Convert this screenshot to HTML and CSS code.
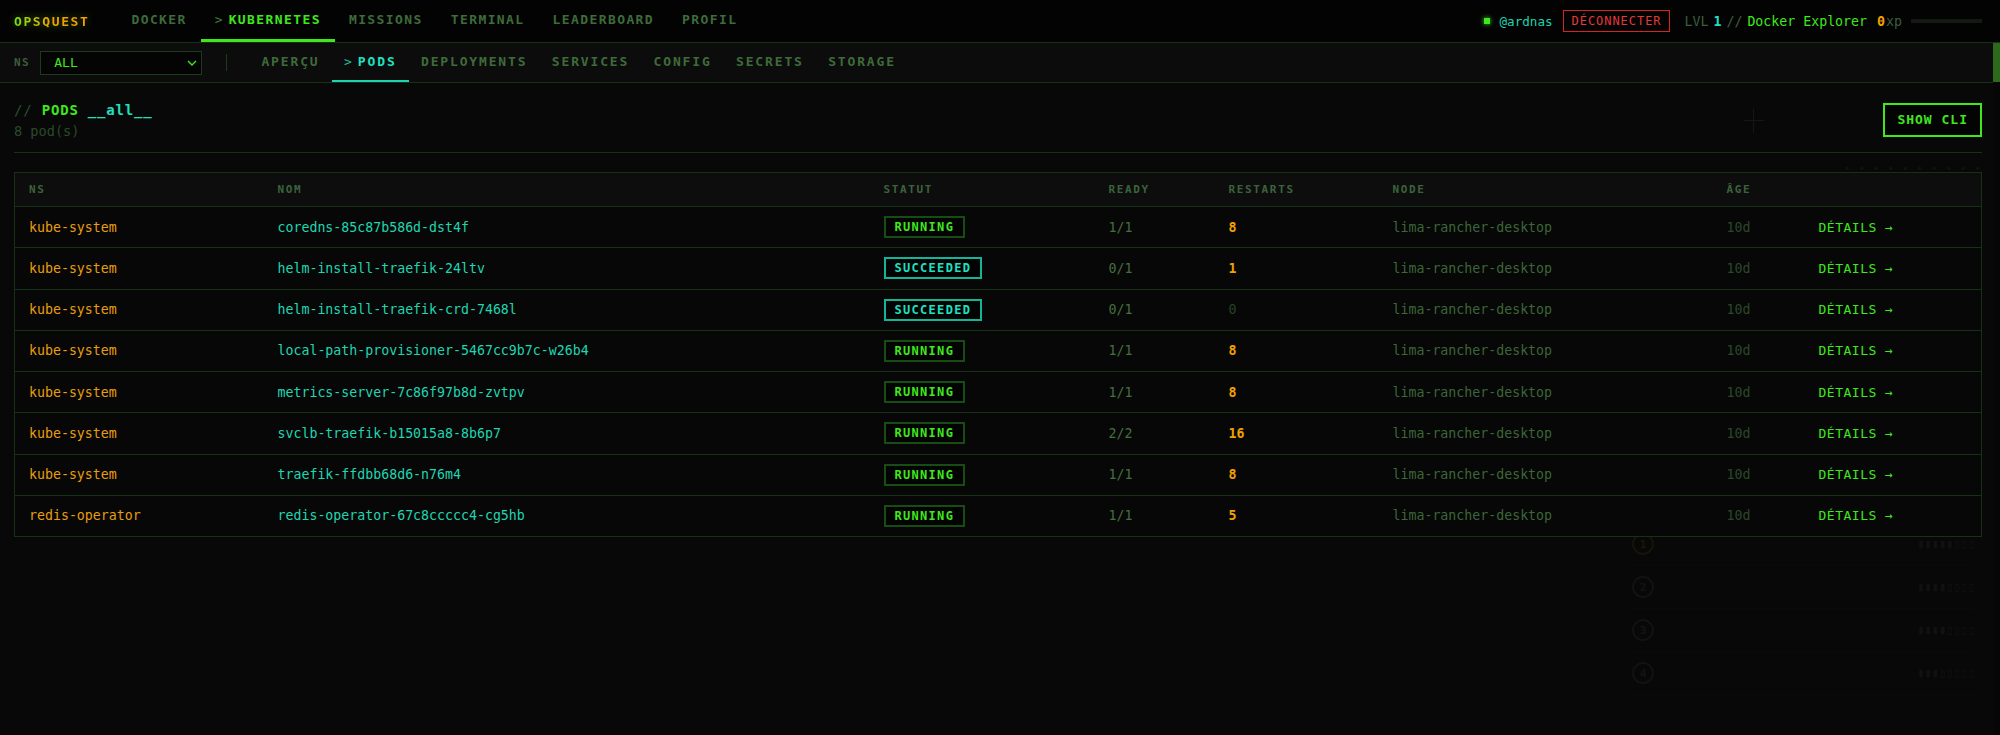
FILE: index.html
```html
<!DOCTYPE html>
<html lang="fr">
<head>
    <meta charset="UTF-8">
    <meta name="viewport" content="width=device-width, initial-scale=1.0">
    <title>OpsQuest - Kubernetes / Pods</title>
    <link rel="stylesheet" href="styles.css">
</head>
<body>
    <header class="topbar">
        <div class="logo">OPSQUEST</div>
        <nav class="mainnav">
            <a class="nav-item" href="#">DOCKER</a>
            <a class="nav-item active" href="#"><span class="caret">&gt;</span>KUBERNETES</a>
            <a class="nav-item" href="#">MISSIONS</a>
            <a class="nav-item" href="#">TERMINAL</a>
            <a class="nav-item" href="#">LEADERBOARD</a>
            <a class="nav-item" href="#">PROFIL</a>
        </nav>
        <div class="user">
            <span class="status-dot"></span>
            <span class="handle">@ardnas</span>
            <button class="logout" type="button">DÉCONNECTER</button>
            <div class="level">
                <span class="dim">LVL</span>
                <span class="lvl-num">1</span>
                <span class="dim">//</span>
                <span class="rank">Docker Explorer</span>
            </div>
            <div class="xp"><span class="xp-num">0</span><span class="dim">xp</span></div>
            <div class="xp-bar"><div class="xp-fill"></div></div>
        </div>
    </header>

    <div class="workspace">
        <div class="workspace-main">
            <!-- faint background decoration -->
            <div class="ghost" aria-hidden="true">
                <span class="crosshair"></span>
                <div class="dots"></div>
                <ol class="ghost-board">
                    <li><span class="ring first">1</span><span class="bars">▮▮▮▮▮▯▯▯</span></li>
                    <li><span class="ring">2</span><span class="bars">▮▮▮▮▯▯▯▯</span></li>
                    <li><span class="ring">3</span><span class="bars">▮▮▮▮▯▯▯▯</span></li>
                    <li><span class="ring">4</span><span class="bars">▮▮▮▯▯▯▯▯</span></li>
                </ol>
            </div>

            <div class="subbar">
                <label class="ns-label" for="ns">NS</label>
                <div class="ns-select">
                    <select id="ns">
                        <option selected>ALL</option>
                        <option>default</option>
                        <option>kube-system</option>
                        <option>redis-operator</option>
                    </select>
                    <svg class="chevron" width="10" height="6" viewBox="0 0 10 6"><path d="M1 1l4 4 4-4" fill="none" stroke="currentColor" stroke-width="1.4"/></svg>
                </div>
                <span class="vsep"></span>
                <nav class="subnav">
                    <a class="sub-item" href="#">APERÇU</a>
                    <a class="sub-item active" href="#"><span class="caret">&gt;</span>PODS</a>
                    <a class="sub-item" href="#">DEPLOYMENTS</a>
                    <a class="sub-item" href="#">SERVICES</a>
                    <a class="sub-item" href="#">CONFIG</a>
                    <a class="sub-item" href="#">SECRETS</a>
                    <a class="sub-item" href="#">STORAGE</a>
                </nav>
            </div>

            <main class="content">
                <div class="page-head">
                    <div>
                        <h1 class="page-title"><span class="slashes">//</span> PODS <span class="ns-name">__all__</span></h1>
                        <p class="page-sub">8 pod(s)</p>
                    </div>
                    <button class="btn-cli" type="button">SHOW CLI</button>
                </div>

                <table class="pods">
                    <colgroup>
                        <col class="c-ns"><col class="c-name"><col class="c-status"><col class="c-ready">
                        <col class="c-restarts"><col class="c-node"><col class="c-age"><col class="c-action">
                    </colgroup>
                    <thead>
                        <tr>
                            <th>NS</th><th>NOM</th><th>STATUT</th><th>READY</th>
                            <th>RESTARTS</th><th>NODE</th><th>ÂGE</th><th></th>
                        </tr>
                    </thead>
                    <tbody>
                        <tr>
                            <td class="ns">kube-system</td>
                            <td class="name">coredns-85c87b586d-dst4f</td>
                            <td><span class="badge running">RUNNING</span></td>
                            <td class="ready">1/1</td>
                            <td class="restarts">8</td>
                            <td class="node">lima-rancher-desktop</td>
                            <td class="age">10d</td>
                            <td><a class="details" href="#">DÉTAILS →</a></td>
                        </tr>
                        <tr>
                            <td class="ns">kube-system</td>
                            <td class="name">helm-install-traefik-24ltv</td>
                            <td><span class="badge succeeded">SUCCEEDED</span></td>
                            <td class="ready">0/1</td>
                            <td class="restarts">1</td>
                            <td class="node">lima-rancher-desktop</td>
                            <td class="age">10d</td>
                            <td><a class="details" href="#">DÉTAILS →</a></td>
                        </tr>
                        <tr>
                            <td class="ns">kube-system</td>
                            <td class="name">helm-install-traefik-crd-7468l</td>
                            <td><span class="badge succeeded">SUCCEEDED</span></td>
                            <td class="ready">0/1</td>
                            <td class="restarts zero">0</td>
                            <td class="node">lima-rancher-desktop</td>
                            <td class="age">10d</td>
                            <td><a class="details" href="#">DÉTAILS →</a></td>
                        </tr>
                        <tr>
                            <td class="ns">kube-system</td>
                            <td class="name">local-path-provisioner-5467cc9b7c-w26b4</td>
                            <td><span class="badge running">RUNNING</span></td>
                            <td class="ready">1/1</td>
                            <td class="restarts">8</td>
                            <td class="node">lima-rancher-desktop</td>
                            <td class="age">10d</td>
                            <td><a class="details" href="#">DÉTAILS →</a></td>
                        </tr>
                        <tr>
                            <td class="ns">kube-system</td>
                            <td class="name">metrics-server-7c86f97b8d-zvtpv</td>
                            <td><span class="badge running">RUNNING</span></td>
                            <td class="ready">1/1</td>
                            <td class="restarts">8</td>
                            <td class="node">lima-rancher-desktop</td>
                            <td class="age">10d</td>
                            <td><a class="details" href="#">DÉTAILS →</a></td>
                        </tr>
                        <tr>
                            <td class="ns">kube-system</td>
                            <td class="name">svclb-traefik-b15015a8-8b6p7</td>
                            <td><span class="badge running">RUNNING</span></td>
                            <td class="ready">2/2</td>
                            <td class="restarts">16</td>
                            <td class="node">lima-rancher-desktop</td>
                            <td class="age">10d</td>
                            <td><a class="details" href="#">DÉTAILS →</a></td>
                        </tr>
                        <tr>
                            <td class="ns">kube-system</td>
                            <td class="name">traefik-ffdbb68d6-n76m4</td>
                            <td><span class="badge running">RUNNING</span></td>
                            <td class="ready">1/1</td>
                            <td class="restarts">8</td>
                            <td class="node">lima-rancher-desktop</td>
                            <td class="age">10d</td>
                            <td><a class="details" href="#">DÉTAILS →</a></td>
                        </tr>
                        <tr>
                            <td class="ns">redis-operator</td>
                            <td class="name">redis-operator-67c8ccccc4-cg5hb</td>
                            <td><span class="badge running">RUNNING</span></td>
                            <td class="ready">1/1</td>
                            <td class="restarts">5</td>
                            <td class="node">lima-rancher-desktop</td>
                            <td class="age">10d</td>
                            <td><a class="details" href="#">DÉTAILS →</a></td>
                        </tr>
                    </tbody>
                </table>
            </main>
        </div>
        <div class="rail"><div class="rail-thumb"></div></div>
    </div>
</body>
</html>
```

FILE: styles.css
```css
* {
    box-sizing: border-box;
}

html, body {
    height: 100%;
}

body {
    margin: 0;
    display: flex;
    flex-direction: column;
    overflow: hidden;
    background-color: #080808;
    color: #3e6e3e;
    font-family: "DejaVu Sans Mono", "Liberation Mono", monospace;
    font-size: 13.25px;
}

a {
    text-decoration: none;
    color: inherit;
}

button {
    font-family: inherit;
    cursor: pointer;
}

/* top bar */

.topbar {
    flex: none;
    display: flex;
    align-items: center;
    height: 43px;
    padding: 0 18px 0 14px;
    background-color: #030303;
    border-bottom: 1px solid #163216;
}

.logo {
    font-size: 13px;
    font-weight: bold;
    letter-spacing: 1.6px;
    background: linear-gradient(90deg, #6ee614 0%, #c8c00a 30%, #f5a000 50%, #f5a000 100%);
    -webkit-background-clip: text;
    background-clip: text;
    -webkit-text-fill-color: transparent;
    filter: drop-shadow(0 0 4px rgba(120, 200, 20, 0.45));
    margin-right: 28px;
}

.mainnav {
    display: flex;
    align-self: stretch;
}

.nav-item {
    display: flex;
    align-items: center;
    padding: 0 14px;
    font-size: 13px;
    font-weight: bold;
    letter-spacing: 1.4px;
    color: #3e6b3a;
    border-bottom: 3px solid transparent;
}

.nav-item.active {
    color: #3ee81c;
    border-bottom-color: #3ee81c;
}

.caret {
    margin-right: 4.6px;
    font-weight: normal;
    color: #3e7a3a;
}

.user {
    margin-left: auto;
    display: flex;
    align-items: center;
}

.status-dot {
    width: 6px;
    height: 6px;
    background-color: #3ee81c;
    box-shadow: 0 0 5px #3ee81c;
    margin-right: 9px;
}

.handle {
    color: #1fd2b0;
    font-size: 12.6px;
    margin-right: 10px;
}

.logout {
    height: 22px;
    padding: 0 8px;
    background: transparent;
    border: 1.5px solid #d42424;
    color: #e23a3a;
    font-size: 12px;
    letter-spacing: 0.95px;
    margin-right: 14px;
}

.level {
    display: flex;
    gap: 5px;
}

.dim {
    color: #3b5f3b;
}

.lvl-num {
    color: #1fe0c0;
    font-weight: bold;
}

.rank {
    color: #3ee81c;
}

.xp {
    margin-left: 10px;
    display: flex;
    gap: 1px;
}

.xp-num {
    color: #f0a000;
    font-weight: bold;
}

.xp-bar {
    width: 71px;
    height: 4px;
    margin-left: 9px;
    background-color: #141914;
}

.xp-fill {
    width: 0;
    height: 100%;
    background-color: #3ee81c;
}

/* work area + its scroll rail */

.workspace {
    flex: 1;
    display: flex;
    min-height: 0;
}

.workspace-main {
    position: relative;
    flex: 1;
    min-width: 0;
    overflow: hidden;
}

.rail {
    flex: none;
    width: 7px;
    background-color: #060606;
}

.rail-thumb {
    height: 39px;
    background-color: #2d6a1c;
}

/* background decoration */

.ghost {
    position: absolute;
    inset: 0;
    pointer-events: none;
}

.crosshair {
    position: absolute;
    left: 1742px;
    top: 66px;
    width: 24px;
    height: 24px;
}

.crosshair::before,
.crosshair::after {
    content: "";
    position: absolute;
    background-color: #161616;
}

.crosshair::before {
    left: 11px;
    top: 0;
    width: 1px;
    height: 24px;
}

.crosshair::after {
    left: 2px;
    top: 11px;
    width: 20px;
    height: 1px;
}

.dots {
    position: absolute;
    left: 1840px;
    top: 118px;
    width: 150px;
    height: 110px;
    background-image: radial-gradient(circle, #141414 1px, transparent 1.6px);
    background-size: 14.5px 14.5px;
}

.ghost-board {
    position: absolute;
    left: 1632px;
    top: 480px;
    width: 361px;
    margin: 0;
    padding: 0 18px 0 0;
    list-style: none;
}

.ghost-board li {
    display: flex;
    align-items: center;
    justify-content: space-between;
    height: 43px;
    border-bottom: 1px solid #0a0a0a;
}

.ring {
    display: flex;
    align-items: center;
    justify-content: center;
    width: 22px;
    height: 22px;
    border: 2px solid #121212;
    border-radius: 50%;
    color: #141414;
    font-size: 11px;
    font-weight: bold;
}

.ring.first {
    border-color: #181308;
    color: #1c160a;
}

.bars {
    color: #111111;
    font-size: 12px;
}

/* sub bar */

.subbar {
    position: relative;
    display: flex;
    align-items: center;
    height: 40px;
    padding-left: 14px;
    background-color: #0c0c0c;
    border-bottom: 1px solid #163216;
}

.ns-label {
    font-size: 11px;
    font-weight: bold;
    letter-spacing: 1.5px;
    color: #3b5f3b;
    margin-right: 10px;
}

.ns-select {
    position: relative;
    width: 162px;
    height: 24px;
}

.ns-select select {
    appearance: none;
    -webkit-appearance: none;
    width: 100%;
    height: 100%;
    padding: 0 0 0 13px;
    background-color: #040404;
    border: 1px solid #1c3a1c;
    border-radius: 0;
    color: #3ee81c;
    font-family: inherit;
    font-size: 13px;
    outline: none;
}

.chevron {
    position: absolute;
    right: 5px;
    top: 9px;
    color: #3ee81c;
    pointer-events: none;
}

.vsep {
    width: 1px;
    height: 17px;
    background-color: #1c3a1c;
    margin: 0 22px 0 24px;
}

.subnav {
    display: flex;
    align-self: stretch;
}

.sub-item {
    display: flex;
    align-items: center;
    padding: 0 12.2px;
    font-size: 13px;
    font-weight: bold;
    letter-spacing: 1.85px;
    color: #3e6b3a;
    border-bottom: 2px solid transparent;
}

.sub-item.active {
    color: #1fe0c0;
    border-bottom-color: #1fd2b0;
}

.sub-item .caret {
    margin-right: 4.3px;
    color: #1fb89c;
}

/* content */

.content {
    position: relative;
    padding: 16px 11px 40px 14px;
}

.page-head {
    display: flex;
    justify-content: space-between;
    align-items: center;
    padding-bottom: 12px;
    border-bottom: 1px solid #163216;
    margin-bottom: 19px;
}

.page-title {
    margin: 0;
    font-size: 14px;
    line-height: 22px;
    letter-spacing: 0.8px;
    color: #3ee81c;
}

.slashes {
    color: #2a522a;
    font-weight: normal;
}

.ns-name {
    color: #1fe0c0;
}

.page-sub {
    margin: 1px 0 0;
    font-size: 13.6px;
    line-height: 18px;
    color: #2a4a2a;
}

.btn-cli {
    height: 34px;
    padding: 0 12px;
    background-color: #040404;
    border: 2px solid #3ee81c;
    color: #3ee81c;
    font-size: 13px;
    font-weight: bold;
    letter-spacing: 1px;
}

/* pods table */

.pods {
    width: 100%;
    border-collapse: collapse;
    table-layout: fixed;
    border: 1px solid #163216;
    background-color: #070707;
}

.c-ns { width: 249px; }
.c-name { width: 606px; }
.c-status { width: 225px; }
.c-ready { width: 120px; }
.c-restarts { width: 164px; }
.c-node { width: 334px; }
.c-age { width: 92px; }

.pods th {
    height: 34px;
    padding: 0 14px;
    text-align: left;
    font-size: 11px;
    font-weight: bold;
    letter-spacing: 1.65px;
    color: #3b633b;
    background-color: #0d0d0d;
    border-bottom: 1px solid #163216;
}

.pods td {
    height: 41.25px;
    padding: 0 14px;
    white-space: nowrap;
    border-bottom: 1px solid #163216;
}

.pods .ns {
    color: #e89e0e;
}

.pods .name {
    color: #1fd6b2;
}

.pods .ready {
    color: #446f40;
}

.pods .restarts {
    color: #f0a000;
    font-weight: bold;
}

.pods .restarts.zero {
    color: #284428;
    font-weight: normal;
}

.pods .node {
    color: #3b6638;
}

.pods .age {
    color: #2b472b;
}

.badge {
    display: inline-block;
    padding: 0 9px;
    line-height: 18px;
    font-size: 12px;
    font-weight: bold;
    letter-spacing: 1.3px;
    border: 2px solid;
    background-color: #030303;
}

.badge.running {
    color: #3ee81c;
    border-color: #174d12;
}

.badge.succeeded {
    color: #1fe0c0;
    border-color: #12b598;
}

.details {
    color: #3ee81c;
    font-size: 13px;
    letter-spacing: 0.5px;
}
```
